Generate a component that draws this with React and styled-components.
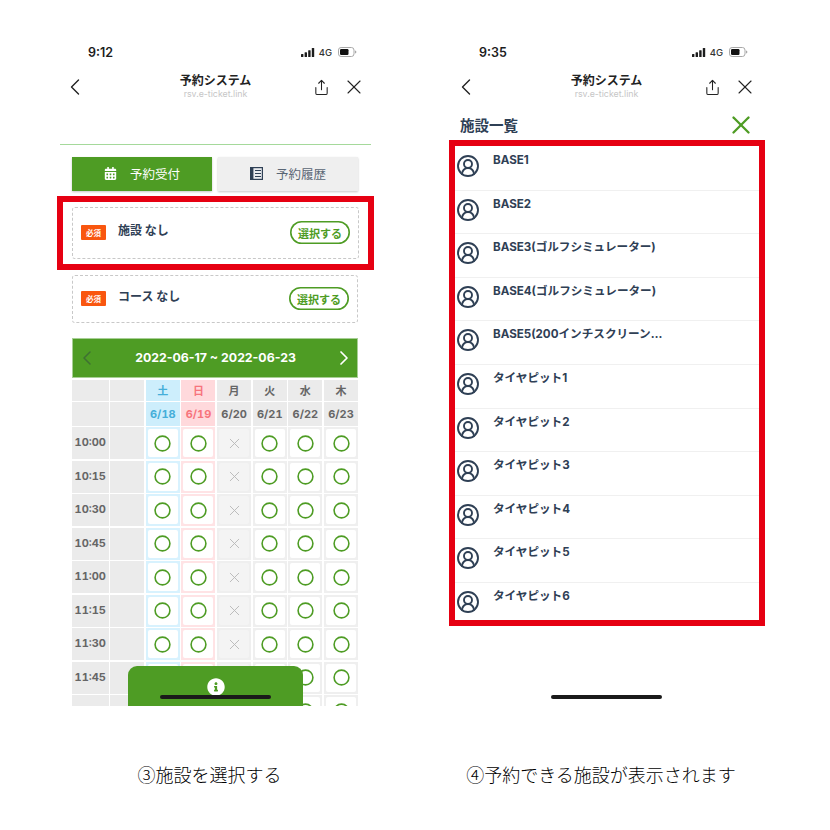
import React from "react";
import styled, { createGlobalStyle } from "styled-components";
import { ChevronLeft, ChevronRight, CircleUserRound, Share, X } from "lucide-react";
import { FaCalendarAlt, FaInfoCircle } from "react-icons/fa";

const GREEN = "#4e9c24";
const NAVY = "#2f4055";
const JP = `"Noto Sans CJK JP", sans-serif`;
const LATIN = `Inter, "Noto Sans CJK JP", sans-serif`;

const days = [
  { name: "土", date: "6/18", tone: "sat" },
  { name: "日", date: "6/19", tone: "sun" },
  { name: "月", date: "6/20", tone: "off" },
  { name: "火", date: "6/21" },
  { name: "水", date: "6/22" },
  { name: "木", date: "6/23" },
];
const times = ["10:00", "10:15", "10:30", "10:45", "11:00", "11:15", "11:30", "11:45", ""];
const facilities = [
  "BASE1",
  "BASE2",
  "BASE3(ゴルフシミュレーター)",
  "BASE4(ゴルフシミュレーター)",
  "BASE5(200インチスクリーン…",
  "タイヤピット1",
  "タイヤピット2",
  "タイヤピット3",
  "タイヤピット4",
  "タイヤピット5",
  "タイヤピット6",
];

function StatusBar({ time }) {
  return (
    <StatusRow>
      <Clock>{time}</Clock>
      <StatusIcons>
        <svg width="14" height="9" viewBox="0 0 14 9" fill="#1c1c1c">
          <rect x="0" y="6" width="2.4" height="3" rx="0.5" />
          <rect x="3.6" y="4.2" width="2.4" height="4.8" rx="0.5" />
          <rect x="7.2" y="2.2" width="2.4" height="6.8" rx="0.5" />
          <rect x="10.8" y="0" width="2.4" height="9" rx="0.5" />
        </svg>
        <Network>4G</Network>
        <svg width="19" height="10" viewBox="0 0 19 10">
          <rect x="0.5" y="0.5" width="15.5" height="9" rx="2.6" fill="none" stroke="#a8a8a8" />
          <rect x="2" y="2" width="8.5" height="6" rx="1.2" fill="#111" />
          <path d="M17 3.5c1 .3 1.4.9 1.4 1.5s-.4 1.2-1.4 1.5z" fill="#a8a8a8" />
        </svg>
      </StatusIcons>
    </StatusRow>
  );
}

function NavBar() {
  return (
    <Nav>
      <ChevronLeft size={28} strokeWidth={1.2} color="#222" />
      <NavTitle>
        <strong>予約システム</strong>
        <span>rsv.e-ticket.link</span>
      </NavTitle>
      <NavActions>
        <Share size={17} strokeWidth={1.5} color="#222" />
        <X size={24} strokeWidth={1.1} color="#222" />
      </NavActions>
    </Nav>
  );
}

function RequiredCard({ label }) {
  return (
    <Card>
      <Required>必須</Required>
      <CardLabel>{label} なし</CardLabel>
      <SelectButton>選択する</SelectButton>
    </Card>
  );
}

function Slot({ tone }) {
  return (
    <SlotCell $tone={tone}>
      <SlotInner $tone={tone}>
        {tone === "off" ? (
          <X size={17} strokeWidth={1.3} color="#b8b8b8" />
        ) : (
          <svg width="17" height="17" viewBox="0 0 17 17">
            <circle cx="8.5" cy="8.5" r="7.4" fill="none" stroke={GREEN} strokeWidth="1.6" />
          </svg>
        )}
      </SlotInner>
    </SlotCell>
  );
}

function Calendar() {
  return (
    <CalendarClip>
      <Grid>
        <HeadCell $h={20.5} />
        <HeadCell $h={20.5} />
        {days.map((d) => (
          <HeadCell key={d.name} $h={20.5} $tone={d.tone} $big>
            {d.name}
          </HeadCell>
        ))}
        <HeadCell $h={23.5} />
        <HeadCell $h={23.5} />
        {days.map((d) => (
          <HeadCell key={d.date} $h={23.5} $tone={d.tone}>
            {d.date}
          </HeadCell>
        ))}
        {times.map((t, i) => (
          <React.Fragment key={i}>
            <TimeCell $h={32}>{t}</TimeCell>
            <HeadCell $h={32} />
            {days.map((d) => (
              <Slot key={d.date} tone={d.tone} />
            ))}
          </React.Fragment>
        ))}
      </Grid>
      <InfoSheet>
        <FaInfoCircle size={18} color="#fff" />
      </InfoSheet>
    </CalendarClip>
  );
}

export default function App() {
  return (
    <>
      <GlobalStyle />
      <Page>
        <LeftColumn>
          <Chrome>
            <StatusBar time="9:12" />
            <NavBar />
          </Chrome>
          <Rule />
          <Tabs>
            <Tab $active>
              <FaCalendarAlt size={13} color="#fff" />
              予約受付
            </Tab>
            <Tab>
              <svg width="13" height="13" viewBox="0 0 13 13">
                <rect x="0.6" y="0.6" width="11.8" height="11.8" fill="#e9ebef" stroke={NAVY} strokeWidth="1.2" />
                <rect x="1" y="1" width="2.4" height="11" fill={NAVY} />
                <path d="M5 3.5h6M5 6.5h6M5 9.5h6" stroke={NAVY} strokeWidth="1" />
              </svg>
              予約履歴
            </Tab>
          </Tabs>
          <CardHighlight>
            <RequiredCard label="施設" />
          </CardHighlight>
          <SecondCard>
            <RequiredCard label="コース" />
          </SecondCard>
          <RangeBar>
            <ChevronLeft size={24} strokeWidth={1.5} color="#3f7033" />
            <span>2022-06-17 ~ 2022-06-23</span>
            <ChevronRight size={24} strokeWidth={1.7} color="#fff" />
          </RangeBar>
          <Calendar />
          <HomeBar $left={100} />
          <Caption>③施設を選択する</Caption>
        </LeftColumn>
        <RightColumn>
          <Chrome $shift={2}>
            <StatusBar time="9:35" />
            <NavBar />
          </Chrome>
          <ListHeading>
            <h2>施設一覧</h2>
            <X size={30} strokeWidth={1.9} color={GREEN} />
          </ListHeading>
          <ListHighlight>
            {facilities.map((name) => (
              <FacilityRow key={name}>
                <CircleUserRound size={24} strokeWidth={1.9} color={NAVY} />
                <FacilityName>{name}</FacilityName>
              </FacilityRow>
            ))}
          </ListHighlight>
          <HomeBar $left={102} />
          <Caption>④予約できる施設が表示されます</Caption>
        </RightColumn>
      </Page>
    </>
  );
}

const GlobalStyle = createGlobalStyle`
  html, body {
    margin: 0;
    padding: 0;
    background: #fff;
  }
  * {
    box-sizing: border-box;
  }
`;

const Page = styled.div`
  width: 830px;
  height: 830px;
  display: flex;
  padding-left: 60px;
  gap: 78px;
  overflow: hidden;
  font-family: ${JP};
`;

const Column = styled.div`
  position: relative;
  height: 787px;
  padding-top: 40px;
  display: flex;
  flex-direction: column;
`;

const LeftColumn = styled(Column)`
  width: 311px;
`;

const RightColumn = styled(Column)`
  width: 316px;
`;

const Chrome = styled.div`
  width: 311px;
  margin-left: ${(p) => p.$shift || 0}px;
`;

const StatusRow = styled.div`
  height: 24px;
  display: flex;
  align-items: center;
  justify-content: space-between;
  padding: 0 14px 0 28px;
`;

const Clock = styled.span`
  font: 600 12.5px ${LATIN};
  color: #1c1c1c;
`;

const StatusIcons = styled.div`
  display: flex;
  align-items: center;
  gap: 4px;

  svg:last-child {
    margin-left: 2px;
  }
`;

const Network = styled.span`
  font: 500 9.5px ${LATIN};
  color: #333;
`;

const Nav = styled.div`
  height: 46px;
  display: flex;
  align-items: center;
  justify-content: space-between;
  padding: 0 5px 0 1px;
`;

const NavTitle = styled.div`
  display: flex;
  flex-direction: column;
  align-items: center;
  margin: -2px 0 0 29px;

  strong {
    font: 700 12px/16px ${JP};
    color: #222;
  }

  span {
    font: 400 8.8px/12px ${LATIN};
    color: #c6c6c6;
  }
`;

const NavActions = styled.div`
  display: flex;
  align-items: center;
  gap: 12px;
`;

const Rule = styled.div`
  height: 1px;
  margin-top: 34px;
  background: #a5d99b;
`;

const Tabs = styled.div`
  margin: 12px 0 0 12px;
  width: 286px;
  display: grid;
  grid-template-columns: 1fr 1fr;
  gap: 6px;
`;

const Tab = styled.div`
  height: 34px;
  padding-bottom: 2px;
  display: flex;
  align-items: center;
  justify-content: center;
  gap: 13px;
  font: 400 12.5px ${JP};
  color: ${(p) => (p.$active ? "#fff" : "#5a6675")};
  background: ${(p) => (p.$active ? GREEN : "#efefef")};
  box-shadow: 0 1px 2px rgba(0, 0, 0, 0.22);
`;

const CardHighlight = styled.div`
  margin: 5px 0 0 -3px;
  width: 317px;
  height: 74px;
  padding: 5px 9px;
  border: 6px solid #e60012;
`;

const SecondCard = styled.div`
  margin: 5px 0 0 12px;
  width: 286px;
  height: 48px;
`;

const Card = styled.div`
  height: 100%;
  display: flex;
  align-items: center;
  padding: 0 8px 0 8px;
  border: 1px dashed #c8c8c8;
  border-radius: 3px;
`;

const Required = styled.span`
  width: 25px;
  height: 15px;
  display: flex;
  align-items: center;
  justify-content: center;
  margin-top: -2px;
  border-radius: 1px;
  background: #f9560f;
  color: #fff;
  font: 700 7.5px ${JP};
`;

const CardLabel = styled.span`
  margin: -8px 0 0 12px;
  font: 700 12px ${JP};
  color: ${NAVY};
`;

const SelectButton = styled.span`
  margin: -1px 0 0 auto;
  width: 60px;
  height: 23px;
  display: flex;
  align-items: center;
  justify-content: center;
  box-shadow: inset 0 0 0 1.6px ${GREEN};
  border-radius: 12px;
  color: ${GREEN};
  font: 700 11px ${JP};
`;

const RangeBar = styled.div`
  margin: 15px 0 0 12px;
  width: 286px;
  height: 40px;
  display: flex;
  align-items: center;
  justify-content: space-between;
  padding: 0 1px 1px 2px;
  background: ${GREEN};
  border: 1px solid #a7cf95;
  color: #fff;
  font: 700 12.3px ${LATIN};
`;

const CalendarClip = styled.div`
  position: relative;
  margin: 2px 0 0 12px;
  width: 286px;
  height: 326px;
  overflow: hidden;
`;

const Grid = styled.div`
  display: grid;
  grid-template-columns: 36.5px repeat(7, 1fr);
  column-gap: 1.7px;
  row-gap: 1.5px;
`;

const toneBg = { sat: "#cdeefc", sun: "#ffd9dc" };
const toneText = { sat: "#45aed9", sun: "#f7747c" };
const slotBorder = { sat: "#d8f2fe", sun: "#ffe3e5" };

const HeadCell = styled.div`
  height: ${(p) => p.$h}px;
  display: flex;
  align-items: center;
  justify-content: center;
  background: ${(p) => toneBg[p.$tone] || "#ebebeb"};
  color: ${(p) => toneText[p.$tone] || "#666"};
  font: ${(p) => (p.$big ? `700 11px ${JP}` : `700 11px ${LATIN}`)};
  font-variant-numeric: tabular-nums;
`;

const TimeCell = styled(HeadCell)`
  padding-bottom: 2px;
`;

const SlotCell = styled.div`
  height: 32px;
  padding: 2px;
  background: ${(p) => slotBorder[p.$tone] || "#efefef"};
`;

const SlotInner = styled.div`
  height: 100%;
  display: flex;
  align-items: center;
  justify-content: center;
  border-radius: 2px;
  background: ${(p) => (p.$tone === "off" ? "#f4f4f4" : "#fff")};
`;

const InfoSheet = styled.div`
  position: absolute;
  left: 56px;
  bottom: 0;
  width: 175px;
  height: 40px;
  padding-top: 12px;
  display: flex;
  justify-content: center;
  border-radius: 9px 9px 0 0;
  background: ${GREEN};
`;

const HomeBar = styled.div`
  position: absolute;
  left: ${(p) => p.$left}px;
  top: 695px;
  width: 111px;
  height: 3.5px;
  border-radius: 2px;
  background: #1a1a1a;
`;

const Caption = styled.p`
  margin: auto 12px 0 0;
  text-align: center;
  font: 300 18px/26px ${JP};
  color: #000;
`;

const ListHeading = styled.div`
  height: 30px;
  display: flex;
  align-items: center;
  justify-content: space-between;
  padding: 0 9px 0 11px;

  h2 {
    margin: -2px 0 0;
    font: 700 14.5px ${JP};
    color: ${NAVY};
  }
`;

const ListHighlight = styled.div`
  height: 486px;
  padding-top: 1px;
  border: 6px solid #e60012;
  overflow: hidden;
`;

const FacilityRow = styled.div`
  height: 43.6px;
  display: flex;
  align-items: flex-start;
  gap: 13px;
  padding: 7px 0 0 1px;
  border-bottom: 1px solid #f0f0f0;

  svg {
    flex: none;
  }
`;

const FacilityName = styled.span`
  white-space: nowrap;
  margin-top: -2px;
  font: 700 11.6px/16px ${LATIN};
  color: ${NAVY};
`;
